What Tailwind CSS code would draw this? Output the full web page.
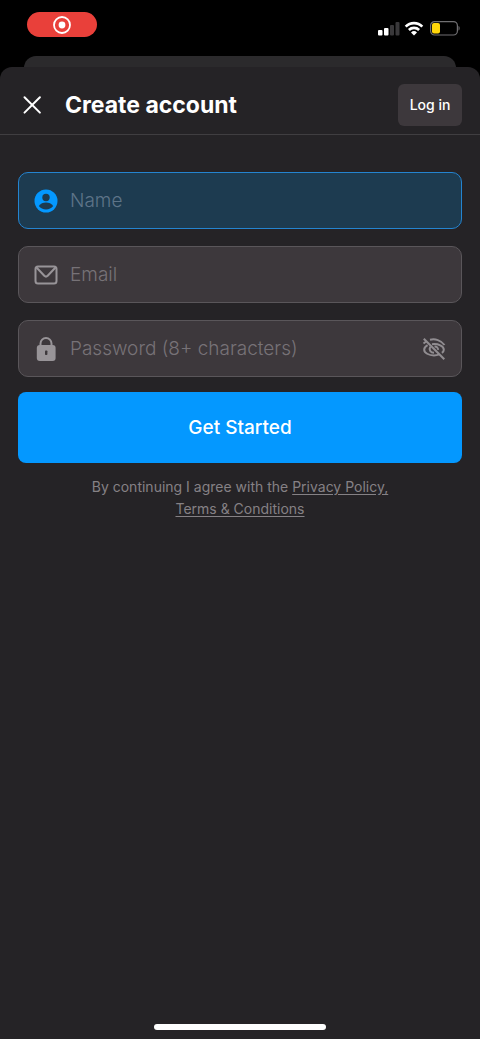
<!DOCTYPE html>
<html lang="en">
<head>
<meta charset="utf-8">
<meta name="viewport" content="width=device-width, initial-scale=1">
<title>Create account</title>
<script src="https://cdn.jsdelivr.net/npm/@tailwindcss/browser@4"></script>
</head>
<body class="flex min-h-screen flex-col bg-black font-['Inter','Liberation_Sans',sans-serif] text-white">
  <div class="flex h-14 items-start justify-between pt-3 pr-5 pl-[27px]">
    <div class="flex h-[25px] w-[70px] items-center justify-center rounded-full bg-[#e9403a]">
      <svg class="size-5" viewBox="0 0 20 20" fill="none" aria-hidden="true"><circle cx="10" cy="10" r="8" stroke="#fff" stroke-width="1.8"/><circle cx="10" cy="10" r="3.4" fill="#fff"/></svg>
    </div>
    <div class="flex items-center gap-1 pt-2">
      <svg class="h-4 w-[23px]" viewBox="0 0 23 16" aria-hidden="true"><rect x="1" y="10" width="4.500" height="5.500" rx="1" fill="#fff"/><rect x="7" y="8" width="4.500" height="7.500" rx="1" fill="#fff"/><rect x="13" y="5" width="4" height="10.500" rx="1" fill="#39383a"/><rect x="18.500" y="2" width="4" height="13.500" rx="1" fill="#39383a"/></svg>
      <svg class="h-4 w-5" viewBox="0 0 20 16" fill="none" stroke="#fff" stroke-width="2.600" aria-hidden="true"><path d="M1.700 6.700C6.200 1.900 13.800 1.900 18.300 6.700"/><path d="M4.900 10c2.800-2.800 7.400-2.800 10.200 0"/><path d="M7 12.500a4.300 4.300 0 0 1 6 0l-3 3z" fill="#fff" stroke="none"/></svg>
      <svg class="h-4 w-8" viewBox="0 0 32 16" aria-hidden="true"><rect x="2.600" y="1.600" width="26.800" height="13.400" rx="4" fill="none" stroke="#706f72" stroke-width="1.200"/><rect x="4" y="3" width="8" height="10.600" rx="2" fill="#ffd60a"/><path d="M30.500 6c1.500.5 1.500 4 0 4.600z" fill="#706f72"/></svg>
    </div>
  </div>
  <div class="mx-6 h-6 rounded-t-xl bg-[#2b2a2c]"></div>
  <main class="relative -mt-[13px] flex flex-1 flex-col rounded-t-xl bg-[#252326]">
    <header class="flex h-[68px] items-center border-b border-[#403e41] pt-2 pr-[18px] pl-[22px]">
      <button type="button" aria-label="Close" class="size-5">
        <svg class="size-5" viewBox="0 0 20 20" fill="none" stroke="#fff" stroke-width="2" stroke-linecap="round" aria-hidden="true"><path d="M2.500 2.200l15.400 15.400M17.900 2.200L2.500 17.600"/></svg>
      </button>
      <h1 class="ml-[23px] flex-1 text-[23px] leading-8 font-bold">Create account</h1>
      <button type="button" class="h-[42px] w-16 rounded-md bg-[#3d383c] text-sm font-medium">Log in</button>
    </header>
    <form class="flex flex-col px-[18px] pt-[37px]">
      <div class="flex flex-col gap-[17px]">
        <label class="flex h-[57px] items-center gap-3 rounded-[10px] border border-[#2484d0] bg-[#1d3b50] px-[15px]">
          <svg class="size-6 shrink-0" viewBox="0 0 24 24" aria-hidden="true"><circle cx="12" cy="12" r="11.500" fill="#0498ff"/><circle cx="12" cy="8.500" r="3.700" fill="#1d3b50"/><path d="M4.800 17c1.600-2.500 4.300-3.500 7.200-3.500s5.600 1 7.200 3.500c-1.700 2.200-4.300 3.400-7.200 3.400S6.500 19.200 4.800 17z" fill="#1d3b50"/></svg>
          <input type="text" aria-label="Name" placeholder="Name" class="min-w-0 flex-1 bg-transparent pt-[2px] text-[19px] font-light outline-none placeholder:text-[#5d7488]">
        </label>
        <label class="flex h-[57px] items-center gap-3 rounded-[10px] border border-[#5a565a] bg-[#3d383c] px-[15px]">
          <svg class="size-6 shrink-0" viewBox="0 0 24 24" fill="none" stroke="#989498" stroke-width="2" stroke-linejoin="round" aria-hidden="true"><rect x="1.500" y="3.500" width="21" height="17" rx="2.500"/><path d="M2.500 4.500l7.800 8.300q1.700 1.600 3.400 0l7.800-8.300"/></svg>
          <input type="email" aria-label="Email" placeholder="Email" class="min-w-0 flex-1 bg-transparent pt-[2px] text-[19px] font-light outline-none placeholder:text-[#777277]">
        </label>
        <div class="flex h-[57px] items-center gap-3 rounded-[10px] border border-[#5a565a] bg-[#3d383c] px-[15px]">
          <svg class="size-6 shrink-0" viewBox="0 0 24 24" aria-hidden="true"><path d="M6.500 10V6.500a5.500 5.500 0 0 1 11 0V10" fill="none" stroke="#989498" stroke-width="2"/><rect x="2.800" y="8" width="18.800" height="16" rx="3" fill="#989498"/><rect x="11" y="13.500" width="2.400" height="4.500" rx=".8" fill="#3d383c"/></svg>
          <input type="password" aria-label="Password" placeholder="Password (8+ characters)" class="min-w-0 flex-1 bg-transparent pt-[2px] text-[19px] font-light outline-none placeholder:text-[#777277]">
          <button type="button" aria-label="Show password" class="size-6 shrink-0">
            <svg class="size-6" viewBox="0 0 24 24" fill="none" stroke="#918d91" stroke-width="2" aria-hidden="true"><path d="M8 2.800c5-1.300 11 .3 14.500 5.200"/><path d="M1.500 6.500l3-2.300"/><path d="M5.600 8.200C3.600 9.300 2.200 10.800 2.200 12.700c0 3.200 4.600 5.700 9.800 5.700 2 0 3.800-.4 5.300-1"/><path d="M10 7.200c6.400-.8 11.800 2.200 11.800 5.500 0 1.200-.7 2.300-1.900 3.200"/><path d="M8.300 9.800c-1.700 3 .3 6 3.700 6M12.500 9.500c2.200-.2 3.700 1.500 3.500 3.300"/><path d="M1.800 1.800l20.500 20.500"/></svg>
          </button>
        </div>
      </div>
      <button type="submit" class="mt-[15px] h-[71px] rounded-lg bg-[#0498ff] pt-[2px] text-[19px] font-medium">Get Started</button>
    </form>
    <p class="mx-auto mt-[13px] max-w-[320px] text-center text-sm leading-[22px] text-[#858185]">By continuing I agree with the <a href="#privacy" class="underline underline-offset-2">Privacy Policy,</a> <a href="#terms" class="underline underline-offset-2">Terms &amp; Conditions</a></p>
    <div class="mx-auto mt-auto mb-[9px] h-[6px] w-[172px] rounded-full bg-white"></div>
  </main>
</body>
</html>
